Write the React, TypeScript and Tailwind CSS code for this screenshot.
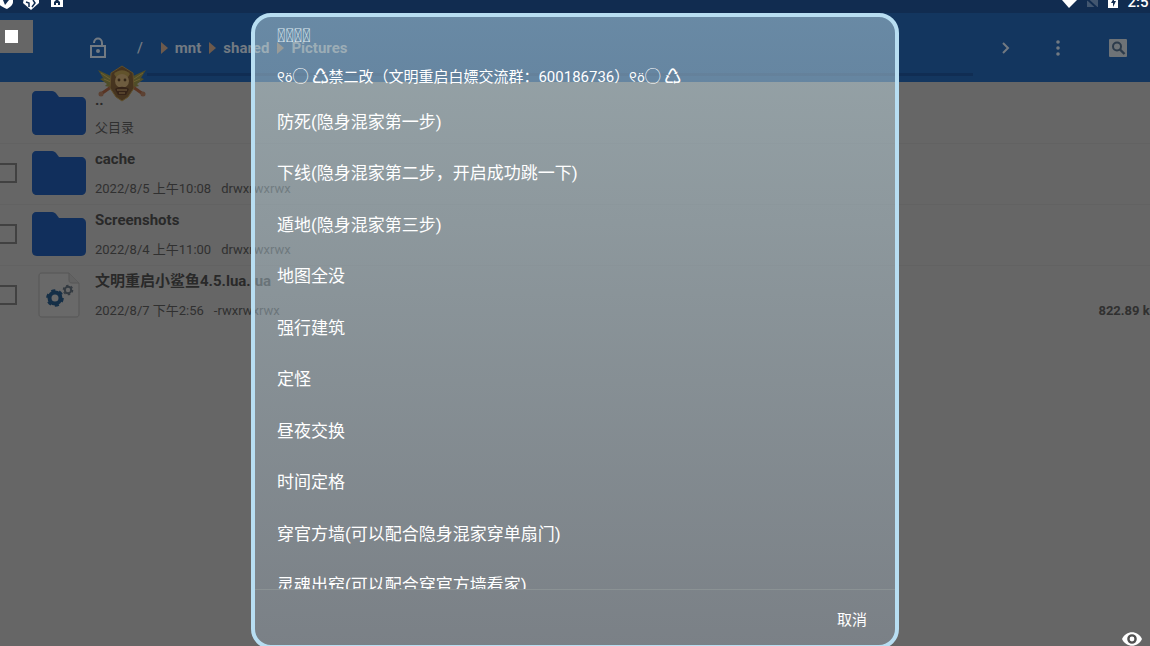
import React, { useState } from "react";

interface FileEntry {
  name: string;
  date: string;
  mode: string;
  size?: string;
  kind: "folder" | "script";
}

const crumbs = ["mnt", "shared", "Pictures"];

const files: FileEntry[] = [
  { name: "cache", date: "2022/8/5 上午10:08", mode: "drwxrwxrwx", kind: "folder" },
  { name: "Screenshots", date: "2022/8/4 上午11:00", mode: "drwxrwxrwx", kind: "folder" },
  {
    name: "文明重启小鲨鱼4.5.lua.lua",
    date: "2022/8/7 下午2:56",
    mode: "-rwxrwxrwx",
    size: "822.89 kB",
    kind: "script",
  },
];

const menuItems = [
  "防死(隐身混家第一步)",
  "下线(隐身混家第二步，开启成功跳一下)",
  "遁地(隐身混家第三步)",
  "地图全没",
  "强行建筑",
  "定怪",
  "昼夜交换",
  "时间定格",
  "穿官方墙(可以配合隐身混家穿单扇门)",
  "灵魂出窍(可以配合穿官方墙看家)",
];

const FolderIcon = () => (
  <svg viewBox="0 0 54 44" className="w-[54px] h-11 shrink-0" aria-hidden="true">
    <path
      d="M4 0h16c2 0 3 1 4 2l3 4h22c3 0 5 2 5 5v28c0 3-2 5-5 5H5c-3 0-5-2-5-5V4c0-2 2-4 4-4z"
      fill="#112f5c"
    />
  </svg>
);

const ScriptIcon = () => (
  <svg viewBox="0 0 54 46" className="w-[54px] h-[46px] shrink-0" aria-hidden="true">
    <path
      d="M10 1h27l10 10v31c0 2-1 3-3 3H10c-2 0-3-1-3-3V4c0-2 1-3 3-3z"
      fill="#696969"
      stroke="#575757"
    />
    <path d="M37 1v7c0 2 1 3 3 3h7" fill="#626262" stroke="#575757" />
    <circle cx="23" cy="26" r="5.5" fill="none" stroke="#152f47" strokeWidth="4" />
    <circle
      cx="23"
      cy="26"
      r="7.6"
      fill="none"
      stroke="#152f47"
      strokeWidth="2.4"
      strokeDasharray="4 3.96"
    />
    <circle cx="36" cy="18" r="3.2" fill="none" stroke="#343b42" strokeWidth="2" />
    <circle
      cx="36"
      cy="18"
      r="4.6"
      fill="none"
      stroke="#343b42"
      strokeWidth="1.4"
      strokeDasharray="2.4 2.4"
    />
  </svg>
);

const Emblem = () => (
  <svg viewBox="0 0 50 37" className="w-[50px] h-[37px]" aria-hidden="true">
    <path d="M16 12 1 5l5 8-3 1 7 5-2 2 9 2z" fill="#4f4d28" />
    <path d="M34 12 49 5l-5 8 3 1-7 5 2 2-9 2z" fill="#4f4d28" />
    <path d="M4 8l12 8M7 14l9 4M46 8l-12 8M43 14l-9 4" stroke="#6e6232" />
    <path d="M14 22 4 29M36 22l10 7" stroke="#5a3524" strokeWidth="3" />
    <circle cx="4" cy="29" r="2.5" fill="#5d4233" />
    <circle cx="46" cy="29" r="2.5" fill="#5d4233" />
    <path d="M14 8 25 1l11 7 1 15-6 9-6 4-6-4-6-9z" fill="#46341f" stroke="#5f4e2a" />
    <path d="M17 9c4-5 12-5 16 0l-2 3H19z" fill="#62532c" />
    <circle cx="25" cy="16" r="7" fill="#6e5c3f" />
    <circle cx="22" cy="15" r="1.4" fill="#352718" />
    <circle cx="28" cy="15" r="1.4" fill="#352718" />
    <path d="M18 24c4-3 10-3 14 0l-3 6h-8z" fill="#352318" />
    <path d="M20 25h10M22 28h6" stroke="#75613e" />
  </svg>
);

const StatusBar = () => (
  <div className="flex h-[13px] items-start justify-between overflow-hidden bg-[#112c50]">
    <svg viewBox="0 0 70 13" className="w-[70px] h-[13px]" aria-hidden="true">
      <path d="M-2-3h15v5c0 3-3 5-6 7-4-2-9-4-9-7z" fill="#fff" />
      <path d="M3 0l6 0-4 5z" fill="#112c50" />
      <path d="M24-2h15v5l-8 7-8-7z" fill="#fff" />
      <path d="M26 2l3 1v4M33 0l2 3-3 4" stroke="#112c50" strokeWidth="1.5" fill="none" />
      <path d="M51-4h12V7H51z" fill="#fff" />
      <path d="M54 5V2l3-3 3 3v3h-2V3h-2v2z" fill="#112c50" />
    </svg>
    <div className="flex items-start">
      <svg viewBox="0 0 66 13" className="w-[66px] h-[13px]" aria-hidden="true">
        <path d="M1 0h15L8 8z" fill="#fff" />
        <path d="M26 7V1l4-4h7V7z" fill="#42566f" />
        <path d="M25-2l11 10" stroke="#112c50" strokeWidth="2" />
        <path d="M47-3h10V8H47z" fill="#fff" />
        <path d="M53-2l-3 5h2v4l3-6h-2z" fill="#112c50" />
      </svg>
      <span className="-mr-[7px] -mt-[7px] text-[15px] leading-[18px] font-medium text-white">2:57</span>
    </div>
  </div>
);

const Toolbar = () => (
  <header className="relative flex h-[69px] items-center bg-[#13365f] text-[#727a82]">
    <button aria-label="unlock" className="ml-[89px] shrink-0">
      <svg viewBox="0 0 18 22" className="w-[18px] h-[22px]" fill="none" stroke="currentColor" strokeWidth="2">
        <path d="M2 9h14v11H2zM5 6c0-6 8-6 8 0v3" />
        <circle cx="9" cy="14" r="2" fill="currentColor" stroke="none" />
      </svg>
    </button>
    <nav className="ml-[30px] flex items-center text-[15px] leading-5 font-bold">
      <a href="#root" className="mr-[18px] font-medium">/</a>
      {crumbs.map((crumb) => (
        <a key={crumb} href={`#${crumb}`} className="mr-2 flex items-center gap-[7px]">
          <svg viewBox="0 0 7 12" className="w-[7px] h-3" aria-hidden="true">
            <path d="M0 0l7 6-7 6z" fill="#6d5a4c" />
          </svg>
          {crumb}
        </a>
      ))}
    </nav>
    <div className="ml-auto flex items-center pr-[23px]">
      <button aria-label="forward" className="mr-[46px]">
        <svg viewBox="0 0 8 12" className="w-2 h-3" fill="none" stroke="currentColor" strokeWidth="2">
          <path d="M1 1l5 5-5 5" />
        </svg>
      </button>
      <button aria-label="more" className="mr-[49px]">
        <svg viewBox="0 0 4 16" className="w-1 h-4" fill="currentColor">
          <circle cx="2" cy="2" r="1.8" />
          <circle cx="2" cy="8" r="1.8" />
          <circle cx="2" cy="14" r="1.8" />
        </svg>
      </button>
      <button aria-label="search">
        <svg viewBox="0 0 18 18" className="w-[18px] h-[18px]">
          <rect width="18" height="18" rx="1" fill="#6e7377" />
          <circle cx="8" cy="7.5" r="4" fill="none" stroke="#2c3b4b" strokeWidth="2" />
          <path d="M11 10.5l4.5 4.5" stroke="#2c3b4b" strokeWidth="2.4" />
        </svg>
      </button>
    </div>
    <div className="absolute bottom-[6px] left-[147px] right-[177px] h-[3px] bg-[#102d53]" />
  </header>
);

const FileRow: React.FC<{ file: FileEntry }> = ({ file }) => (
  <li className="flex h-[61px] items-center border-t border-[#626262]">
    <input
      type="checkbox"
      aria-label={file.name}
      className="-ml-[3px] mb-[3px] mr-[15px] size-5 shrink-0 appearance-none border-2 border-[#414141]"
    />
    <span className="mb-[3px] shrink-0">{file.kind === "folder" ? <FolderIcon /> : <ScriptIcon />}</span>
    <div className="ml-[9px] flex flex-col gap-[10px] whitespace-nowrap">
      <span className="text-[15px] leading-5 font-bold text-[#292929]">{file.name}</span>
      <span className="flex gap-[10px] text-[13px] leading-5 text-[#303030]">
        <span>{file.date}</span>
        <span>{file.mode}</span>
      </span>
    </div>
    {file.size && (
      <span className="-mr-2 mb-[5px] ml-auto self-end text-[13px] leading-5 font-bold text-[#303030]">
        {file.size}
      </span>
    )}
  </li>
);

const MenuDialog = ({ onClose }: { onClose: () => void }) => (
  <div
    role="dialog"
    aria-labelledby="menu-title"
    className="absolute inset-x-4 top-[13px] -bottom-[3px] mx-auto flex max-w-[648px] flex-col overflow-hidden rounded-[20px] border-4 border-[#b8def2] bg-linear-to-b from-[#d2f0fa]/45 to-[#93a0ad]/45 bg-origin-border text-white"
  >
    <div className="flex flex-col px-[22px] pt-2">
      <span className="h-[22px] text-[19px] leading-[22px] text-[#dce9f0]">{"\uE000\uE001\uE002\uE003"}</span>
      <h1 id="menu-title" className="mt-5 h-5 text-[15px] leading-5 whitespace-nowrap">
        ୧<span className="text-[13px]">ö</span>
        <span className="text-[16px]">◯ ♺</span>禁二改（文明重启白嫖交流群：600186736）୧
        <span className="text-[13px]">ö</span>
        <span className="text-[16px]">◯ ♺</span>
      </h1>
    </div>
    <div className="mt-[9px] min-h-0 flex-1 overflow-hidden">
      <ul className="grid h-[515px] auto-rows-fr">
        {menuItems.map((item) => (
          <li key={item}>
            <button className="flex h-full w-full items-center px-[22px] text-left text-[17px] leading-6">
              {item}
            </button>
          </li>
        ))}
      </ul>
    </div>
    <div className="flex h-14 shrink-0 items-center justify-end border-t border-[#8b9294] px-7">
      <button onClick={onClose} className="mt-1 text-[15px] leading-5">
        取消
      </button>
    </div>
  </div>
);

const App: React.FC = () => {
  const [menuOpen, setMenuOpen] = useState(true);

  return (
    <div className="relative h-screen overflow-hidden bg-[#666] font-[Roboto,'Noto_Sans_CJK_SC',sans-serif]">
      <StatusBar />
      <Toolbar />
      <ul>
        <li className="flex h-[61px] items-center">
          <span className="ml-8">
            <FolderIcon />
          </span>
          <div className="ml-[9px] flex flex-col gap-2 pt-[2px]">
            <span className="text-[15px] leading-5 font-bold text-[#292929]">..</span>
            <span className="text-[13px] leading-5 text-[#303030]">父目录</span>
          </div>
        </li>
        {files.map((file) => (
          <FileRow key={file.name} file={file} />
        ))}
      </ul>

      <button
        aria-label="stop"
        className="absolute left-0 top-5 flex h-[33px] w-[33px] items-center bg-[#666] pl-[5px]"
      >
        <span className="size-[13px] bg-white" />
      </button>
      <div className="absolute left-[97px] top-[65px]">
        <Emblem />
      </div>
      {menuOpen && <MenuDialog onClose={() => setMenuOpen(false)} />}
      <button
        aria-label="show menu"
        onClick={() => setMenuOpen(true)}
        className="absolute bottom-0 right-2"
      >
        <svg viewBox="0 0 20 14" className="w-5 h-[14px]">
          <path d="M0 7C4-2 16-2 20 7 16 16 4 16 0 7z" fill="#fff" />
          <circle cx="10" cy="7" r="3.6" fill="none" stroke="#505050" strokeWidth="2.4" />
        </svg>
      </button>
    </div>
  );
};

export default App;
